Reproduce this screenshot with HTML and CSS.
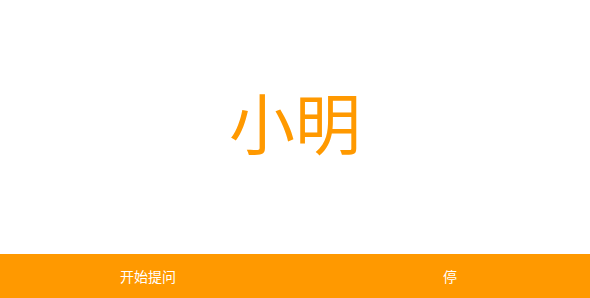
FILE: index.html
```html
<!DOCTYPE html>
<html lang="zh">
<head>
<meta charset="utf-8">
<link rel="stylesheet" href="styles.css">
</head>
<body>
<div class="page">
  <main class="stage">
    <div class="name">小明</div>
  </main>
  <footer class="bar">
    <button class="btn btn-start">开始提问</button>
    <button class="btn btn-stop">停</button>
  </footer>
</div>
</body>
</html>
```

FILE: styles.css
```css
html, body {
  margin: 0;
  padding: 0;
  background: #ffffff;
}
.page {
  width: 590px;
  height: 298px;
  display: flex;
  flex-direction: column;
  font-family: "Noto Sans CJK SC", "Noto Sans", sans-serif;
}
.stage {
  flex: 1;
  display: flex;
  align-items: center;
  justify-content: center;
}
.name {
  color: #ff9900;
  font-size: 66px;
  line-height: 1;
  margin-bottom: 14px;
}
.bar {
  height: 44px;
  background: #ff9900;
  display: flex;
}
.btn {
  border: 0;
  background: transparent;
  color: #ffffff;
  font-family: inherit;
  font-size: 14px;
  padding: 0;
  margin: 0;
  line-height: 44px;
}
.btn-start {
  width: 296px;
}
.btn-stop {
  flex: 1;
  padding-left: 14px;
}
```
